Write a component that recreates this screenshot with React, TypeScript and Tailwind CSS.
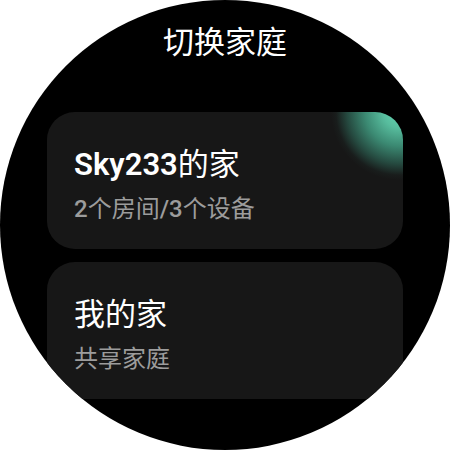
import React from "react";

const font = { fontFamily: 'Roboto, "Noto Sans CJK SC", sans-serif' };

function Card({ title, sub, glow }: { title: React.ReactNode; sub: React.ReactNode; glow?: boolean }) {
  return (
    <div
      className={
        "relative w-[356px] h-[137px] shrink-0 rounded-[28px] overflow-hidden pl-[27px] pt-[35px] " +
        (glow
          ? "bg-[radial-gradient(circle_at_352px_0px,#66d6b3_0px,#57bc9d_16px,#3b8972_34px,#25493f_52px,#191d1c_63px,#171717_68px)]"
          : "bg-[#171717]")
      }
    >
      <div className="relative text-[31px] leading-[36px] text-white font-semibold">{title}</div>
      <div className="relative mt-[11px] text-[24px] leading-[30px] text-[#9c9c9c] font-medium">{sub}</div>
    </div>
  );
}

export default function App() {
  return (
    <div className="w-[450px] h-[450px] bg-white" style={font}>
      <div className="w-[450px] h-[450px] rounded-full bg-black overflow-hidden flex flex-col items-center">
        <div className="mt-[23px] text-[31px] leading-[40px] text-white">切换家庭</div>
        <div className="mt-[49px] h-[288px] overflow-hidden flex flex-col gap-[13px]">
          <Card glow title={<>Sky233<span className="font-normal">的家</span></>} sub={<>2<span className="font-normal">个房间</span>/3<span className="font-normal">个设备</span></>} />
          <Card title={<span className="font-normal">我的家</span>} sub={<span className="font-normal">共享家庭</span>} />
        </div>
      </div>
    </div>
  );
}
